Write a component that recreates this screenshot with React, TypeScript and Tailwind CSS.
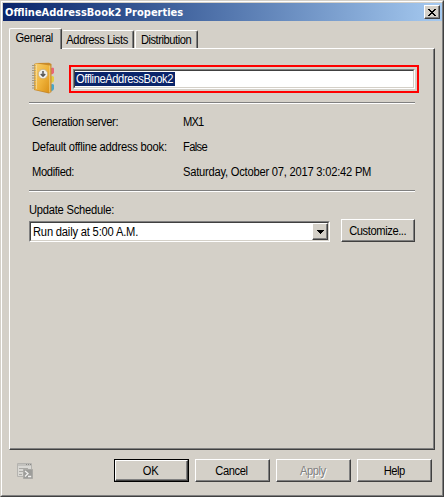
import React from 'react';

const raised =
  'border border-t-white border-l-white border-r-[#404040] border-b-[#404040] shadow-[inset_-1px_-1px_0_#808080]';

const narrow = 'inline-block scale-x-93 whitespace-nowrap';
const narrowLeft = 'inline-block origin-left scale-x-93 whitespace-nowrap';

function DialogButton({ children, className }: { children: React.ReactNode; className: string }) {
  return (
    <button className={`flex h-[23px] shrink-0 items-center justify-center bg-[#d4d0c8] ${raised} ${className}`}>
      {children}
    </button>
  );
}

function AddressBookIcon() {
  return (
    <svg width="28" height="34" viewBox="0 0 28 34">
      <defs>
        <linearGradient id="cover" x1="0" y1="0" x2="1" y2="1">
          <stop offset="0" stopColor="#f6cf70" />
          <stop offset="0.55" stopColor="#efb239" />
          <stop offset="1" stopColor="#d98f16" />
        </linearGradient>
      </defs>
      <path d="M19 6.5l3-1 1 1v4l-1 1.5-3 .5z" fill="#e8667a" />
      <path d="M19 14.5l3-.5 1 1v4l-1 1.5-3 .5z" fill="#e3cf45" />
      <path d="M19 22.5l3-.5 1 1v4l-1 1.5-3 1z" fill="#4aa6c9" />
      <path d="M3 2L6 1L18 0.8L20.5 2V30L18 31.5L3 28Z" fill="#c88a2c" />
      <path d="M3.5 2.3L6 1.5L18.8 3.5V30.5L3.5 27.5Z" fill="url(#cover)" />
      <path d="M18.8 3.5V30.5" stroke="#f9dd96" strokeWidth="0.8" />
      <path d="M5.5 2.5V27" stroke="#fbe1a0" strokeWidth="0.7" />
      <path
        d="M1 3.5h3.5M1 6h3.5M1 8.5h3.5M1 11h3.5M1 13.5h3.5M1 16h3.5M1 18.5h3.5M1 21h3.5M1 23.5h3.5M1 26h3.5"
        stroke="#a3977f"
        strokeWidth="1.1"
      />
      <circle cx="12" cy="12" r="4.7" fill="#efefec" stroke="#c3a66f" strokeWidth="0.7" />
      <path d="M12 9v5M9.8 11.9L12 14.2l2.200-2.300" fill="none" stroke="#555" strokeWidth="1.5" />
    </svg>
  );
}

function ScriptIcon() {
  return (
    <svg width="16" height="16" viewBox="0 0 16 16">
      <path d="M0.5 0.5h14v13h-14z" fill="#d9d8d4" stroke="#b4b3af" />
      <path d="M1 1h13v2H1z" fill="#c3c2be" />
      <path d="M9 1.5h1M11 1.5h1M13 1.5h1" stroke="#8b8b88" />
      <path d="M2 5.5h9M2 8.5h4M2 11.5h3" stroke="#aaa9a5" />
      <path d="M6.5 6.5h9v9h-9z" fill="#9d9d9a" stroke="#aaa9a5" />
      <path d="M8 8l3 2.6L8 13.4M11 13.5h3.2" fill="none" stroke="#f1f0ee" strokeWidth="1.3" />
    </svg>
  );
}

function Property({ label, value, labelClass, valueClass }: { label: string; value: string; labelClass: string; valueClass: string }) {
  return (
    <div className="flex h-[25px] items-center whitespace-nowrap">
      <div className="w-[151px] shrink-0"><span className={`${narrowLeft} ${labelClass}`}>{label}</span></div>
      <span className={`${narrowLeft} ${valueClass}`}>{value}</span>
    </div>
  );
}

export default function App() {
  return (
    <div className="h-[497px] w-[444px] overflow-hidden border border-t-[#d4d0c8] border-l-[#d4d0c8] border-r-[#404040] border-b-[#404040] bg-[#d4d0c8] font-['Liberation_Sans',Arial,sans-serif] text-[12px] leading-[14px] text-black">
      <div className="flex h-full flex-col border border-t-white border-l-white border-r-[#808080] border-b-[#808080]">
        <header className="mt-px ml-px flex h-[18px] shrink-0 items-center justify-between bg-linear-to-r from-[#0a246a] to-[#a6caf0] pr-[2px] pl-[2px]">
          <h1 className="pt-px font-['DejaVu_Sans_Condensed','DejaVu_Sans',sans-serif] text-[11px] font-bold whitespace-nowrap text-white [font-stretch:condensed]">
            OfflineAddressBook2 Properties
          </h1>
          <button aria-label="Close" className={`flex h-[14px] w-4 items-center justify-center bg-[#d4d0c8] ${raised}`}>
            <svg width="8" height="7" viewBox="0 0 8 7" shapeRendering="crispEdges">
              <path d="M0 0h2v1h1v1h2V1h1V0h2v1H7v1H6v1H5v1h1v1h1v1h1v1H6V6H5V5H3v1H2v1H0V6h1V5h1V4h1V3H2V2H1V1H0z" />
            </svg>
          </button>
        </header>

        <nav className="mt-[7px] ml-[7px] flex h-5 shrink-0 items-end whitespace-nowrap">
          <div className="z-10 -mb-px flex h-[21px] w-[53px] items-center justify-center rounded-t-[2px] border border-b-0 border-t-white border-l-white border-r-[#404040] bg-[#d4d0c8] pr-[2px] pb-[2px] shadow-[inset_-1px_0_0_#808080]">
            <span className={`${narrow} tracking-[-0.33px]`}>General</span>
          </div>
          <div className="flex h-[18px] w-[72px] items-center justify-center rounded-t-[2px] border border-b-0 border-t-white border-l-transparent border-r-[#404040] pr-px shadow-[inset_-1px_0_0_#808080]">
            <span className={`${narrow} tracking-[-0.45px]`}>Address Lists</span>
          </div>
          <div className="ml-px flex h-[18px] w-[63px] items-center justify-center rounded-t-[2px] border border-b-0 border-t-white border-l-white border-r-[#404040] pr-px shadow-[inset_-1px_0_0_#808080]">
            <span className={`${narrow} tracking-[-0.5px]`}>Distribution</span>
          </div>
        </nav>

        <main className={`ml-[7px] h-[402px] w-[426px] shrink-0 pl-[19px] ${raised}`}>
          <div className="flex h-11 pt-4">
            <div className="w-10 shrink-0">
              <div className="-mt-[3px] ml-[2px]"><AddressBookIcon /></div>
            </div>
            <div className="h-7 w-[350px] border-2 border-[#f00] p-[2px]">
              <div className="h-5 border border-t-[#808080] border-l-[#808080] border-r-white border-b-white">
                <div className="h-full border border-t-[#404040] border-l-[#404040] border-r-[#d4d0c8] border-b-[#d4d0c8] bg-white pt-px">
                  <div className="h-[14px] w-[100px] bg-[#0a246a] pl-px text-white">
                    <span className={`${narrowLeft} tracking-[-0.43px]`}>OfflineAddressBook2</span>
                  </div>
                </div>
              </div>
            </div>
          </div>

          <div className="mt-[9px] h-[2px] w-[386px] border-t border-b border-t-[#808080] border-b-white" />
          <section className="mt-[5px] ml-[3px]">
            <Property label="Generation server:" value="MX1" labelClass="tracking-[-0.37px]" valueClass="tracking-[-0.9px]" />
            <Property label="Default offline address book:" value="False" labelClass="tracking-[-0.24px]" valueClass="tracking-[-0.7px]" />
            <Property label="Modified:" value="Saturday, October 07, 2017 3:02:42 PM" labelClass="tracking-[-0.38px]" valueClass="tracking-[-0.24px]" />
          </section>
          <div className="mt-[6px] h-[2px] w-[386px] border-t border-b border-t-[#808080] border-b-white" />

          <div className="mt-[11px] h-[14px]"><span className={`${narrowLeft} tracking-[-0.25px]`}>Update Schedule:</span></div>
          <div className="mt-[2px] flex w-[386px] justify-between">
            <div className="mt-[2px] h-[21px] w-[301px] border border-t-[#808080] border-l-[#808080] border-r-white border-b-white">
              <div className="flex h-full items-center justify-between border border-t-[#404040] border-l-[#404040] border-r-[#d4d0c8] border-b-[#d4d0c8] bg-white pl-[2px]">
                <span className={`${narrowLeft} pt-px tracking-[-0.2px]`}>Run daily at 5:00 A.M.</span>
                <div className={`flex h-[17px] w-4 items-center justify-center bg-[#d4d0c8] ${raised}`}>
                  <svg width="7" height="4" viewBox="0 0 7 4" shapeRendering="crispEdges"><path d="M0 0h7v1H6v1H5v1H4v1H3V3H2V2H1V1H0z" /></svg>
                </div>
              </div>
            </div>
            <DialogButton className="w-[74px]"><span className={`${narrow} tracking-[-0.44px]`}>Customize...</span></DialogButton>
          </div>
        </main>

        <footer className="mt-[9px] ml-[15px] flex shrink-0">
          <div className="mt-[4px] w-[97px]"><ScriptIcon /></div>
          <div className="flex gap-[6px]">
            <div className="h-[23px] w-[75px] border border-black">
              <div className={`flex h-full items-center justify-center ${raised}`}><span className={`${narrow} pr-[2px]`}>OK</span></div>
            </div>
            <DialogButton className="w-[75px]"><span className={`${narrow} pr-[2px] tracking-[-0.45px]`}>Cancel</span></DialogButton>
            <DialogButton className="w-[75px]"><span className={`${narrow} pr-px tracking-[-0.5px] text-[#808080] [text-shadow:1px_1px_0_white]`}>Apply</span></DialogButton>
            <DialogButton className="w-[75px]"><span className={`${narrow} pr-px tracking-[-0.6px]`}>Help</span></DialogButton>
          </div>
        </footer>
      </div>
    </div>
  );
}
